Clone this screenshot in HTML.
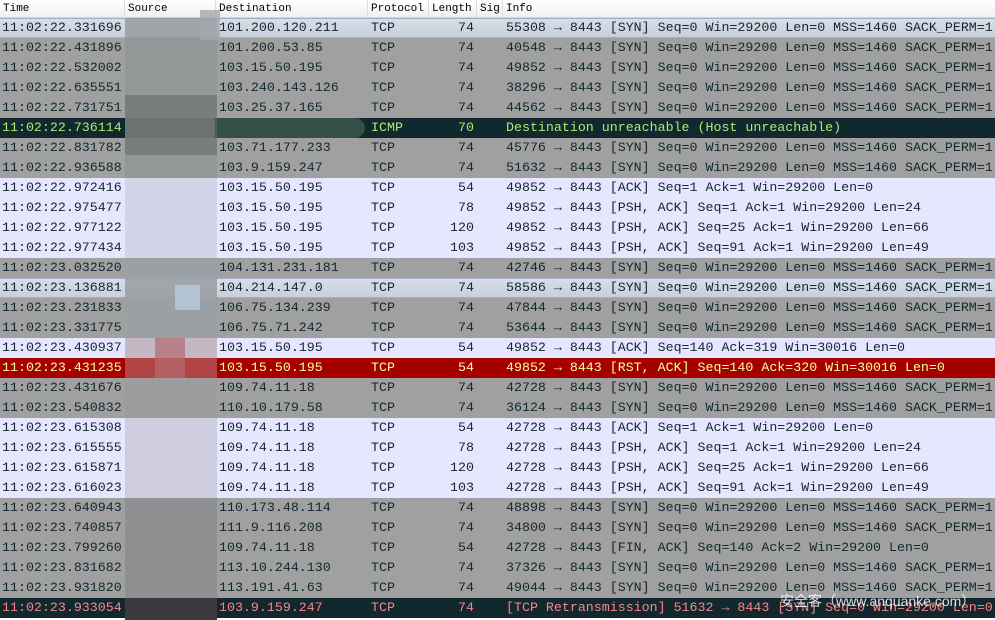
<!DOCTYPE html>
<html><head><meta charset="utf-8"><style>
*{margin:0;padding:0;box-sizing:border-box}
body{width:995px;height:620px;overflow:hidden;background:#fff;font-family:"Liberation Mono","DejaVu Sans Mono",monospace;position:relative}
.hdr{position:absolute;left:0;top:0;width:995px;height:18px;background:linear-gradient(#fff,#f0f0f0);border-bottom:1px solid #d5d5d5;font-size:11px;color:#000}
.hdr span{position:absolute;top:3px}
.hdr i{position:absolute;top:0;height:17px;border-left:1px solid #dcdcdc}
.row{position:absolute;left:0;width:995px;height:20px;font-size:13.3px;line-height:20px;white-space:pre;color:#12272e}
.row span{position:absolute;top:0}
.s{background:#a0a0a0}
.a{background:#e7e6ff}
.sel{background:linear-gradient(#d8dde6,#c8d0dc);border-top:1px solid #9fb0c8;border-bottom:1px solid #9fb0c8;line-height:18px}
.i{background:#12272e;color:#a6ee74}
.r{background:#a40000;color:#fffc9c}
.t{background:#12272e;color:#f78787}
.c0{left:2px}.c2{left:219px}.c3{left:371px}.c4{right:521px}.c6{left:506px}
.blur{position:absolute;left:125px;width:92px;height:20px}
.wm{position:absolute;left:780px;top:591px;font-family:"Liberation Sans","Noto Sans CJK SC",sans-serif;font-size:14px;color:rgba(255,255,255,0.85)}
</style></head><body>
<div class="hdr"><span style="left:3px">Time</span><i style="left:124px"></i><span style="left:128px">Source</span><i style="left:215px"></i><span style="left:219px">Destination</span><i style="left:367px"></i><span style="left:371px">Protocol</span><i style="left:428px"></i><span style="left:432px">Length</span><i style="left:476px"></i><span style="left:480px">Sig</span><i style="left:502px"></i><span style="left:506px">Info</span></div>
<div id="rows"></div>
<div class="row sel" style="top:18px"><span class="c0">11:02:22.331696</span><span class="c2">101.200.120.211</span><span class="c3">TCP</span><span class="c4">74</span><span class="c6">55308 → 8443 [SYN] Seq=0 Win=29200 Len=0 MSS=1460 SACK_PERM=1</span></div>
<div class="row s" style="top:38px"><span class="c0">11:02:22.431896</span><span class="c2">101.200.53.85</span><span class="c3">TCP</span><span class="c4">74</span><span class="c6">40548 → 8443 [SYN] Seq=0 Win=29200 Len=0 MSS=1460 SACK_PERM=1</span></div>
<div class="row s" style="top:58px"><span class="c0">11:02:22.532002</span><span class="c2">103.15.50.195</span><span class="c3">TCP</span><span class="c4">74</span><span class="c6">49852 → 8443 [SYN] Seq=0 Win=29200 Len=0 MSS=1460 SACK_PERM=1</span></div>
<div class="row s" style="top:78px"><span class="c0">11:02:22.635551</span><span class="c2">103.240.143.126</span><span class="c3">TCP</span><span class="c4">74</span><span class="c6">38296 → 8443 [SYN] Seq=0 Win=29200 Len=0 MSS=1460 SACK_PERM=1</span></div>
<div class="row s" style="top:98px"><span class="c0">11:02:22.731751</span><span class="c2">103.25.37.165</span><span class="c3">TCP</span><span class="c4">74</span><span class="c6">44562 → 8443 [SYN] Seq=0 Win=29200 Len=0 MSS=1460 SACK_PERM=1</span></div>
<div class="row i" style="top:118px"><span class="c0">11:02:22.736114</span><span class="c3">ICMP</span><span class="c4">70</span><span class="c6">Destination unreachable (Host unreachable)</span></div>
<div class="row s" style="top:138px"><span class="c0">11:02:22.831782</span><span class="c2">103.71.177.233</span><span class="c3">TCP</span><span class="c4">74</span><span class="c6">45776 → 8443 [SYN] Seq=0 Win=29200 Len=0 MSS=1460 SACK_PERM=1</span></div>
<div class="row s" style="top:158px"><span class="c0">11:02:22.936588</span><span class="c2">103.9.159.247</span><span class="c3">TCP</span><span class="c4">74</span><span class="c6">51632 → 8443 [SYN] Seq=0 Win=29200 Len=0 MSS=1460 SACK_PERM=1</span></div>
<div class="row a" style="top:178px"><span class="c0">11:02:22.972416</span><span class="c2">103.15.50.195</span><span class="c3">TCP</span><span class="c4">54</span><span class="c6">49852 → 8443 [ACK] Seq=1 Ack=1 Win=29200 Len=0</span></div>
<div class="row a" style="top:198px"><span class="c0">11:02:22.975477</span><span class="c2">103.15.50.195</span><span class="c3">TCP</span><span class="c4">78</span><span class="c6">49852 → 8443 [PSH, ACK] Seq=1 Ack=1 Win=29200 Len=24</span></div>
<div class="row a" style="top:218px"><span class="c0">11:02:22.977122</span><span class="c2">103.15.50.195</span><span class="c3">TCP</span><span class="c4">120</span><span class="c6">49852 → 8443 [PSH, ACK] Seq=25 Ack=1 Win=29200 Len=66</span></div>
<div class="row a" style="top:238px"><span class="c0">11:02:22.977434</span><span class="c2">103.15.50.195</span><span class="c3">TCP</span><span class="c4">103</span><span class="c6">49852 → 8443 [PSH, ACK] Seq=91 Ack=1 Win=29200 Len=49</span></div>
<div class="row s" style="top:258px"><span class="c0">11:02:23.032520</span><span class="c2">104.131.231.181</span><span class="c3">TCP</span><span class="c4">74</span><span class="c6">42746 → 8443 [SYN] Seq=0 Win=29200 Len=0 MSS=1460 SACK_PERM=1</span></div>
<div class="row sel" style="top:278px"><span class="c0">11:02:23.136881</span><span class="c2">104.214.147.0</span><span class="c3">TCP</span><span class="c4">74</span><span class="c6">58586 → 8443 [SYN] Seq=0 Win=29200 Len=0 MSS=1460 SACK_PERM=1</span></div>
<div class="row s" style="top:298px"><span class="c0">11:02:23.231833</span><span class="c2">106.75.134.239</span><span class="c3">TCP</span><span class="c4">74</span><span class="c6">47844 → 8443 [SYN] Seq=0 Win=29200 Len=0 MSS=1460 SACK_PERM=1</span></div>
<div class="row s" style="top:318px"><span class="c0">11:02:23.331775</span><span class="c2">106.75.71.242</span><span class="c3">TCP</span><span class="c4">74</span><span class="c6">53644 → 8443 [SYN] Seq=0 Win=29200 Len=0 MSS=1460 SACK_PERM=1</span></div>
<div class="row a" style="top:338px"><span class="c0">11:02:23.430937</span><span class="c2">103.15.50.195</span><span class="c3">TCP</span><span class="c4">54</span><span class="c6">49852 → 8443 [ACK] Seq=140 Ack=319 Win=30016 Len=0</span></div>
<div class="row r" style="top:358px"><span class="c0">11:02:23.431235</span><span class="c2">103.15.50.195</span><span class="c3">TCP</span><span class="c4">54</span><span class="c6">49852 → 8443 [RST, ACK] Seq=140 Ack=320 Win=30016 Len=0</span></div>
<div class="row s" style="top:378px"><span class="c0">11:02:23.431676</span><span class="c2">109.74.11.18</span><span class="c3">TCP</span><span class="c4">74</span><span class="c6">42728 → 8443 [SYN] Seq=0 Win=29200 Len=0 MSS=1460 SACK_PERM=1</span></div>
<div class="row s" style="top:398px"><span class="c0">11:02:23.540832</span><span class="c2">110.10.179.58</span><span class="c3">TCP</span><span class="c4">74</span><span class="c6">36124 → 8443 [SYN] Seq=0 Win=29200 Len=0 MSS=1460 SACK_PERM=1</span></div>
<div class="row a" style="top:418px"><span class="c0">11:02:23.615308</span><span class="c2">109.74.11.18</span><span class="c3">TCP</span><span class="c4">54</span><span class="c6">42728 → 8443 [ACK] Seq=1 Ack=1 Win=29200 Len=0</span></div>
<div class="row a" style="top:438px"><span class="c0">11:02:23.615555</span><span class="c2">109.74.11.18</span><span class="c3">TCP</span><span class="c4">78</span><span class="c6">42728 → 8443 [PSH, ACK] Seq=1 Ack=1 Win=29200 Len=24</span></div>
<div class="row a" style="top:458px"><span class="c0">11:02:23.615871</span><span class="c2">109.74.11.18</span><span class="c3">TCP</span><span class="c4">120</span><span class="c6">42728 → 8443 [PSH, ACK] Seq=25 Ack=1 Win=29200 Len=66</span></div>
<div class="row a" style="top:478px"><span class="c0">11:02:23.616023</span><span class="c2">109.74.11.18</span><span class="c3">TCP</span><span class="c4">103</span><span class="c6">42728 → 8443 [PSH, ACK] Seq=91 Ack=1 Win=29200 Len=49</span></div>
<div class="row s" style="top:498px"><span class="c0">11:02:23.640943</span><span class="c2">110.173.48.114</span><span class="c3">TCP</span><span class="c4">74</span><span class="c6">48898 → 8443 [SYN] Seq=0 Win=29200 Len=0 MSS=1460 SACK_PERM=1</span></div>
<div class="row s" style="top:518px"><span class="c0">11:02:23.740857</span><span class="c2">111.9.116.208</span><span class="c3">TCP</span><span class="c4">74</span><span class="c6">34800 → 8443 [SYN] Seq=0 Win=29200 Len=0 MSS=1460 SACK_PERM=1</span></div>
<div class="row s" style="top:538px"><span class="c0">11:02:23.799260</span><span class="c2">109.74.11.18</span><span class="c3">TCP</span><span class="c4">54</span><span class="c6">42728 → 8443 [FIN, ACK] Seq=140 Ack=2 Win=29200 Len=0</span></div>
<div class="row s" style="top:558px"><span class="c0">11:02:23.831682</span><span class="c2">113.10.244.130</span><span class="c3">TCP</span><span class="c4">74</span><span class="c6">37326 → 8443 [SYN] Seq=0 Win=29200 Len=0 MSS=1460 SACK_PERM=1</span></div>
<div class="row s" style="top:578px"><span class="c0">11:02:23.931820</span><span class="c2">113.191.41.63</span><span class="c3">TCP</span><span class="c4">74</span><span class="c6">49044 → 8443 [SYN] Seq=0 Win=29200 Len=0 MSS=1460 SACK_PERM=1</span></div>
<div class="row t" style="top:598px"><span class="c0">11:02:23.933054</span><span class="c2">103.9.159.247</span><span class="c3">TCP</span><span class="c4">74</span><span class="c6">[TCP Retransmission] 51632 → 8443 [SYN] Seq=0 Win=29200 Len=0</span></div>
<!-- blurred source column -->
<div style="position:absolute;left:125px;top:18px;width:92px;height:160px;background:#8e9494;opacity:.75"></div>
<div style="position:absolute;left:125px;top:95px;width:92px;height:60px;background:#687068;opacity:.6"></div>
<div style="position:absolute;left:200px;top:10px;width:20px;height:30px;background:#a4a8ac;opacity:.8"></div>
<div style="position:absolute;left:125px;top:178px;width:92px;height:80px;background:#d2d2e6;opacity:.9"></div>
<div style="position:absolute;left:125px;top:258px;width:92px;height:80px;background:#9aa0a4;opacity:.9"></div>
<div style="position:absolute;left:175px;top:285px;width:25px;height:25px;background:#b2c4d2"></div>
<div style="position:absolute;left:125px;top:338px;width:92px;height:20px;background:#c4b8c4"></div>
<div style="position:absolute;left:125px;top:358px;width:92px;height:20px;background:#b04444"></div>
<div style="position:absolute;left:155px;top:338px;width:30px;height:70px;background:#b46a70;opacity:.7"></div>
<div style="position:absolute;left:125px;top:378px;width:92px;height:40px;background:#9c9c9c"></div>
<div style="position:absolute;left:125px;top:418px;width:92px;height:80px;background:#cacadc;opacity:.9"></div>
<div style="position:absolute;left:125px;top:498px;width:92px;height:100px;background:#8c8e90;opacity:.9"></div>
<div style="position:absolute;left:125px;top:598px;width:92px;height:22px;background:#3a3a3e"></div>
<div style="position:absolute;left:215px;top:118px;width:150px;height:20px;background:#3e5a4c;opacity:.8;border-radius:0 10px 10px 0"></div>
<div class="wm">安全客（www.anquanke.com）</div>
</body></html>
